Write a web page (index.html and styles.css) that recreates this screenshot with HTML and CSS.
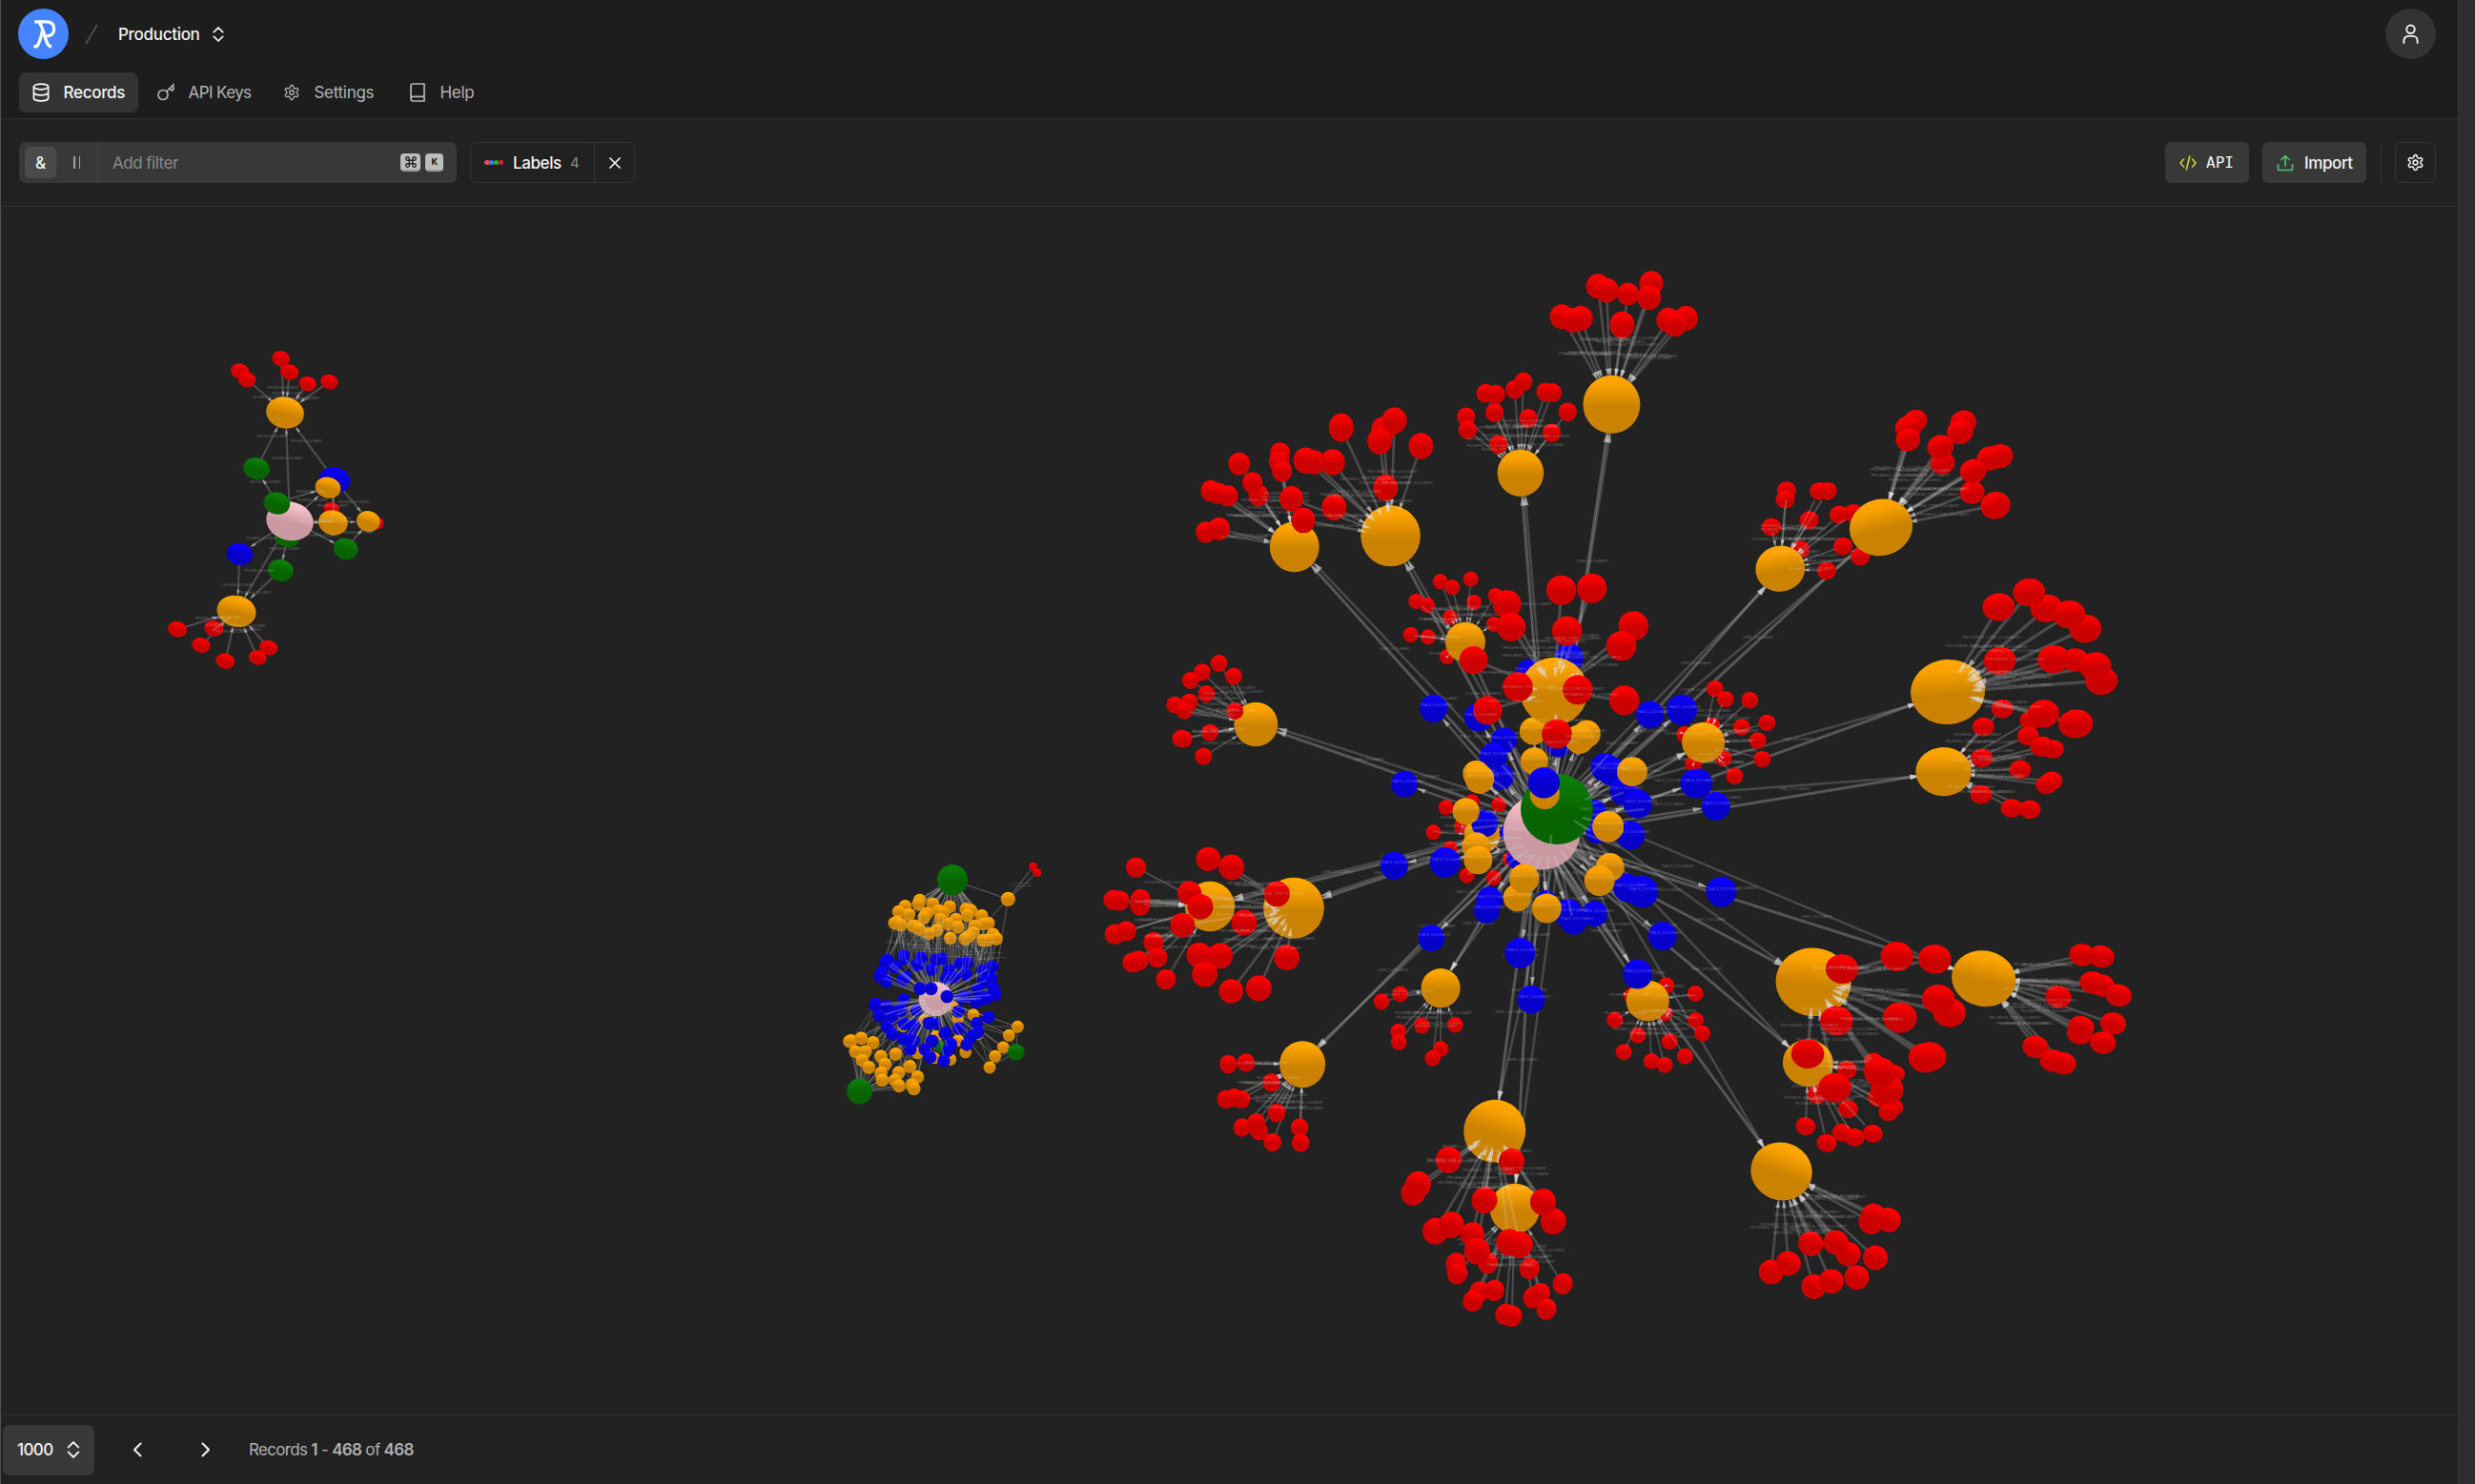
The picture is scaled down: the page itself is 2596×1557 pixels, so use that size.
FILE: index.html
```html
<!DOCTYPE html>
<html lang="en">
<head>
<meta charset="utf-8">
<title>Records</title>
<link rel="stylesheet" href="styles.css">
</head>
<body>
<svg class="defs" width="0" height="0" aria-hidden="true">
  <symbol id="gear" viewBox="0 0 24 24"><path d="M12.2 2h-.4a2 2 0 0 0-2 2v.2a2 2 0 0 1-1 1.7l-.4.3a2 2 0 0 1-2 0l-.2-.1a2 2 0 0 0-2.7.7l-.2.4a2 2 0 0 0 .7 2.7l.2.1a2 2 0 0 1 1 1.7v.5a2 2 0 0 1-1 1.8l-.2.1a2 2 0 0 0-.7 2.7l.2.4a2 2 0 0 0 2.7.7l.2-.1a2 2 0 0 1 2 0l.4.3a2 2 0 0 1 1 1.7v.2a2 2 0 0 0 2 2h.4a2 2 0 0 0 2-2v-.2a2 2 0 0 1 1-1.7l.4-.3a2 2 0 0 1 2 0l.2.1a2 2 0 0 0 2.7-.7l.2-.4a2 2 0 0 0-.7-2.7l-.2-.1a2 2 0 0 1-1-1.8v-.5a2 2 0 0 1 1-1.7l.2-.1a2 2 0 0 0 .7-2.7l-.2-.4a2 2 0 0 0-2.7-.7l-.2.1a2 2 0 0 1-2 0l-.4-.3a2 2 0 0 1-1-1.7V4a2 2 0 0 0-2-2z"/><circle cx="12" cy="12" r="3"/></symbol>
  <symbol id="updown" viewBox="0 0 24 24"><path d="m5 8.500 7-7 7 7M5 15.500l7 7 7-7"/></symbol>
</svg>
<div class="app">
  <header class="header">
    <div class="topbar">
      <svg class="logo" viewBox="0 0 52 52"><circle cx="26" cy="26" r="26"/><path d="M17 13.700h12c5.500 0 8 3 8 7.300 0 4.500-3 7.300-8.500 7.500M22 14.500c3 5 4 9 5.500 14 1.600 6 3 10.500 7 10.500M25.200 22c-1.500 8-3.700 14-6 17h-3.200"/></svg>
      <svg class="slash" viewBox="0 0 14 22"><path d="M1 21 13 1"/></svg>
      <span class="project">Production</span>
      <svg class="icon project-toggle"><use href="#updown"/></svg>
      <div class="avatar"><svg class="icon" viewBox="0 0 18 22"><circle cx="9" cy="6" r="4.500"/><path d="M1.500 21v-2.500a5 5 0 0 1 5-5h5a5 5 0 0 1 5 5V21"/></svg></div>
    </div>
    <nav class="tabs">
      <a class="tab active"><svg class="icon" viewBox="0 0 18 20"><ellipse cx="9" cy="4" rx="7.600" ry="2.800"/><path d="M1.400 4v12c0 1.600 3.400 2.900 7.600 2.900s7.600-1.300 7.600-2.900V4M1.400 10c0 1.600 3.400 2.900 7.600 2.900s7.600-1.300 7.600-2.900"/></svg><span class="t-records">Records</span></a>
      <a class="tab"><svg class="icon" viewBox="0 0 18 20"><circle cx="6" cy="12.500" r="5"/><path d="m9.700 9 7.500-7.500M13 5.600l2.400 2.600 2-2-1.200-3"/></svg><span class="t-api">API Keys</span></a>
      <a class="tab"><svg class="icon"><use href="#gear"/></svg><span class="t-set">Settings</span></a>
      <a class="tab"><svg class="icon" viewBox="0 0 18 20"><path d="M2 16.500V3a2 2 0 0 1 2-2h12v18H4.300A2.300 2.300 0 0 1 2 16.700a2.300 2.300 0 0 1 2.300-2.300H16"/></svg><span class="t-help">Help</span></a>
    </nav>
  </header>

  <div class="toolbar">
    <div class="filter">
      <div class="mode"><span class="and">&amp;</span><span class="or"><i></i><i></i></span></div>
      <span class="placeholder">Add filter</span>
      <kbd><svg class="icon" viewBox="0 0 24 24"><path d="M15 6v12a3 3 0 1 0 3-3H6a3 3 0 1 0 3 3V6a3 3 0 1 0-3 3h12a3 3 0 1 0-3-3"/></svg></kbd><kbd class="k">K</kbd>
    </div>
    <div class="labels">
      <div class="labels-main"><span class="dots"><i class="d1"></i><i class="d2"></i><i class="d3"></i><i class="d4"></i></span><span class="t-labels">Labels</span><span class="count">4</span></div>
      <div class="clear"><svg class="icon" viewBox="0 0 12 12"><path d="m1 1 10 10M11 1 1 11"/></svg></div>
    </div>
    <div class="spacer"></div>
    <button class="btn api"><svg class="icon" viewBox="0 0 18 16"><path d="M4.500 4 1 8l3.500 4M13.500 4 17 8l-3.500 4M10.700 1 7.300 15"/></svg><span>API</span></button>
    <button class="btn import"><svg class="icon" viewBox="0 0 18 18"><path d="M1.500 10.500v5a1 1 0 0 0 1 1h13a1 1 0 0 0 1-1v-5M9 12V2M5 5.500l4-4 4 4"/></svg><span>Import</span></button>
    <div class="sep"></div>
    <button class="square"><svg class="icon"><use href="#gear"/></svg></button>
  </div>

  <main class="canvas"><svg id="graph" viewBox="1 217 2578 1267">
    <defs>
      <linearGradient id="r" x2="0" y2="1"><stop offset="0" stop-color="#ff0000"/><stop offset=".15" stop-color="#f80000"/><stop offset=".55" stop-color="#cb0000"/></linearGradient>
      <linearGradient id="o" x2="0" y2="1"><stop offset="0" stop-color="#ffa800"/><stop offset=".15" stop-color="#fca300"/><stop offset=".55" stop-color="#ca8200"/></linearGradient>
      <linearGradient id="b" x2="0" y2="1"><stop offset="0" stop-color="#0c00ff"/><stop offset=".15" stop-color="#0b00f8"/><stop offset=".55" stop-color="#0700cb"/></linearGradient>
      <linearGradient id="g" x2="0" y2="1"><stop offset="0" stop-color="#0c800c"/><stop offset=".15" stop-color="#0a7a08"/><stop offset=".55" stop-color="#086400"/></linearGradient>
      <linearGradient id="p" x2="0" y2="1"><stop offset="0" stop-color="#fcc4cf"/><stop offset=".15" stop-color="#f2bcc6"/><stop offset=".55" stop-color="#ca99a2"/></linearGradient>
    </defs>
  </svg></main>

  <footer class="footer">
    <div class="limit"><span>1000</span><svg class="icon"><use href="#updown"/></svg></div>
    <svg class="icon prev" viewBox="0 0 10 16"><path d="M8.500 1.500 2 8l6.500 6.500"/></svg>
    <svg class="icon next" viewBox="0 0 10 16"><path d="M1.500 1.500 8 8l-6.500 6.500"/></svg>
    <span class="range">Records <b>1</b> - <b>468</b> of <b>468</b></span>
  </footer>
</div>
<script src="graph.js"></script>
</body>
</html>
```
FILE: styles.css
```css
* { box-sizing: border-box; }
body { margin: 0; background: #212121; color: #f2f2f2; font: 450 17px/22px Inter, "Liberation Sans", sans-serif; letter-spacing: -.2px; white-space: nowrap; }
.defs { display: block; position: absolute; }
.app { width: 2596px; height: 1557px; display: flex; flex-direction: column; border-left: 1px solid #505050; border-right: 17px solid #2d2d2d; box-shadow: inset -1px 0 #393939; overflow: hidden; }
.icon { fill: none; stroke: currentColor; stroke-linecap: round; stroke-linejoin: round; stroke-width: 1.7; flex: none; }
.header { height: 125px; background: #1d1d1d; border-bottom: 1px solid #303030; border-right: 1px solid #393939; padding: 9px 23px 0 18.500px; }
.topbar { height: 53px; display: flex; align-items: center; }
.logo { width: 53px; height: 53px; margin-left: -.5px; fill: none; stroke: #fff; stroke-width: 3.200; stroke-linejoin: round; }
.logo circle { fill: #4583ff; stroke: none; }
.slash { width: 14px; height: 22px; margin-left: 17px; fill: none; stroke: #555; stroke-width: 1.500; }
.project { margin-left: 21px; width: 86px; letter-spacing: -.3px; }
.project-toggle { width: 16px; height: 16px; margin-left: 11px; stroke-width: 2.600; }
.avatar { width: 53px; height: 53px; margin-left: auto; border-radius: 50%; background: #333; display: flex; align-items: center; justify-content: center; }
.avatar .icon { width: 17px; height: 21px; stroke-width: 2; }
.tabs { display: flex; margin-top: 14px; height: 42px; font-weight: 400; color: #b3b3b3; letter-spacing: -.3px; }
.tab { display: flex; align-items: center; padding: 0 15px; gap: 15px; border-radius: 7px; margin-right: 5px; }
.tab .icon { width: 18px; height: 20px; }
.tab.active { background: #333; color: #f5f5f5; font-weight: 450; }
.tab.active .icon { margin-left: -1px; }
.t-records { width: 63px; }
.t-api { width: 64px; letter-spacing: -.6px; }
.t-set { width: 64px; }
.toolbar { height: 92px; border-bottom: 1px solid #2e2e2e; padding: 0 24px 0 19px; display: flex; align-items: center; }
.filter { width: 459px; height: 43px; background: #383838; border-radius: 7px; display: flex; align-items: center; padding-right: 14px; gap: 5px; }
.mode { width: 83px; height: 43px; border-right: 1px solid #474747; display: flex; align-items: center; padding-left: 6px; }
.and { width: 33px; height: 33px; border-radius: 5px; background: #4a4a4a; display: flex; align-items: center; justify-content: center; }
.or { display: flex; gap: 4px; margin-left: 18px; }
.or i { width: 1.500px; height: 13px; background: #a0a0a0; }
.placeholder { flex: 1; margin-left: 10px; color: #8a8a8a; font-weight: 400; letter-spacing: -.5px; }
kbd { width: 21px; height: 19px; border-radius: 4px; background: #bdbdbd; color: #222; border-bottom: 2px solid #999; font: 700 11px/16px "Liberation Mono", monospace; display: flex; align-items: center; justify-content: center; }
kbd.k { width: 19px; }
kbd .icon { width: 14px; height: 14px; stroke-width: 2.200; }
.labels { height: 43px; width: 173px; margin-left: 14px; border: 1px solid #333; border-radius: 7px; display: flex; align-items: center; }
.labels-main { width: 130px; height: 41px; border-right: 1px solid #333; display: flex; align-items: center; padding-left: 14px; }
.dots { display: flex; width: 20px; margin-right: 10px; }
.dots i { width: 5.500px; height: 5.500px; border-radius: 50%; margin-right: -.6px; flex: none; }
.d1 { background: #e05252; } .d2 { background: #3c7dff; } .d3 { background: #2fae2f; } .d4 { background: #e02020; }
.count { margin-left: 10px; color: #8a8a8a; font-size: 15px; font-weight: 400; }
.t-labels { width: 50px; letter-spacing: -.4px; }
.clear { flex: 1; display: flex; justify-content: center; }
.clear .icon { width: 12px; height: 12px; }
.spacer { flex: 1; }
.btn { height: 43px; border: 0; border-radius: 6px; background: #383838; color: #f2f2f2; font: 450 17px/22px Inter, sans-serif; letter-spacing: -.4px; display: flex; align-items: center; padding: 0 15px; }
.api { width: 88px; gap: 10px; margin-right: 14px; }
.api .icon { width: 18px; height: 16px; color: #c9d534; stroke-width: 1.600; }
.api span { font: 400 16px/22px "DejaVu Sans Mono", monospace; letter-spacing: 0; }
.import { width: 109px; gap: 11px; }
.import .icon { width: 18px; height: 18px; color: #46c46d; }
.sep { width: 1px; height: 43px; background: #333; margin: 0 14px 0 15px; }
.square { width: 43px; height: 43px; border: 1px solid #333; border-radius: 6px; background: none; color: #eee; padding: 0; display: flex; align-items: center; justify-content: center; }
.square .icon { width: 19px; height: 19px; stroke-width: 2; }
.canvas { height: 1267px; overflow: hidden; background: #222; border-right: 1px solid #393939; }
#graph { display: block; width: 2578px; height: 1267px; }
#graph line { stroke: #d2d2d2; }
#graph .head { fill: #dcdcdc; fill-opacity: .62; }
#graph text { font-family: "Liberation Sans", sans-serif; font-weight: 400; fill: #e0e0e0; fill-opacity: .38; text-anchor: middle; letter-spacing: 0; }
.footer { height: 73px; border-top: 1px solid #303030; display: flex; align-items: center; padding-left: 2px; }
.limit { width: 96px; height: 53px; border-radius: 7px; background: #383838; display: flex; align-items: center; padding-left: 15px; }
.limit span { width: 37px; letter-spacing: -.6px; }
.limit .icon { width: 18px; height: 18px; margin-left: 13px; stroke-width: 2.600; }
.prev, .next { width: 10px; height: 16px; stroke-width: 2; }
.prev { margin-left: 40px; }
.next { margin-left: 62px; }
.range { margin-left: 40px; color: #b0b0b0; font-weight: 400; letter-spacing: -.68px; }
.range b { font-weight: 600; }
```
FILE: graph.js
```js
const svg = document.getElementById('graph');
const NS = 'http://www.w3.org/2000/svg';
function add(tag, attrs, text) {
  const e = document.createElementNS(NS, tag);
  for (const k in attrs) e.setAttribute(k, attrs[k]);
  if (text) e.textContent = text;
  svg.appendChild(e);
}
const node = (c, x, y, rx, ry = rx, rot = 0) =>
  add('ellipse', { cx: x, cy: y, rx, ry, fill: `url(#${c})`, transform: `rotate(${rot} ${x} ${y})` });
const line = (x1, y1, x2, y2, w, o = .25) =>
  add('line', { x1, y1, x2, y2, 'stroke-width': w, 'stroke-opacity': o });
function head(x, y, ux, uy, s) {
  const bx = x - ux * s, by = y - uy * s, w = s * .28;
  add('polygon', { class: 'head', points: `${x},${y} ${bx - uy * w},${by + ux * w} ${bx + uy * w},${by - ux * w}` });
}
const label = (x, y, size, t) => add('text', { x, y, 'font-size': size }, t);
// Link that stops r short of its target, with an arrow head there.
function link(x1, y1, x2, y2, r, w, s, o) {
  const d = Math.hypot(x2 - x1, y2 - y1) || 1, ux = (x2 - x1) / d, uy = (y2 - y1) / d;
  const tx = x2 - ux * r, ty = y2 - uy * r;
  line(x1, y1, tx, ty, w, o);
  head(tx, ty, ux, uy, s);
  return [x1 + (tx - x1) * .6, y1 + (ty - y1) * .6];
}
// Local coordinate frames: origin x, origin y, units per pixel x, y.
const frames = {
  a: [150, 350, 3, 3], d: [870, 890, 3, 3], n: [1150, 270, 2.45, 3], e: [1780, 400, 3, 3],
  c: [1460, 600, 3, 3], w: [1140, 680, 3, 3], s: [1240, 980, 2.7034, 3], t: [1700, 960, 2.8, 3]
};
const at = (f, x, y) => [frames[f][0] + x / frames[f][2], frames[f][1] + y / frames[f][3]];

const groups = {
  A: ['n', [1324, 463, 30, 30.5], [12.6, 13], 1, [[1196,187],[1245,192],[1225,198],[1289,91],[1311,104],[1366,116,11.5],[1426,82],[1420,127],[1470,198],[1515,192],[1487,211],[1351,213,13,14.300]]],
  B: ['n', [1090, 679, 24.3, 24.6], [9.7, 9.9], 1, [[1000,428],[1027,431],[1075,416],[1097,392],[1154,424],[1172,426],[1023,489],[1110,507],[1211,487],[1170,553],[950,502],[954,543],[1033,589]]],
  C: ['n', [756, 877, 31.3, 32], [13, 13.8], .85, [[629,536,13,15],[738,543],[766,514],[728,579],[834,594],[559,645,12],[538,640],[607,645],[743,725],[611,787],[501,760,12.500],[532,828,12.500]]],
  D: ['n', [509, 911, 26, 26.5], [10.6, 11.2], 1, [[367,650,11.500,12],[472,616],[469,643],[477,673],[417,750],[401,709],[294,735],[313,743],[338,751],[281,865],[315,855,11.500]]],
  E: ['c', [231, 221, 21, 21], [8, 8], 1, [[152,31],[190,49],[248,23],[76,93],[111,105],[258,96],[326,75],[183,144],[321,165],[59,198],[114,205],[174,267]]],
  F: ['c', [510, 376, 35.5, 35.5], [15.8, 15.5], .55, [[533,58],[629,52],[551,186],[760,170],[722,233],[362,102,15],[375,174,15.300],[257,278,15],[396,362],[585,371],[731,404],[301,436,15.300],[519,510]]],
  G: ['c', [980, 537, 22.6, 21.2], [9, 8.7], 1, [[1016,368],[1049,401],[1126,404],[1180,475],[1100,489],[1151,531],[1165,589],[1078,643],[1043,587],[949,604],[1007,485],[922,512]]],
  H: ['c', [284, 828, 19, 19], [8, 8], 1, [[252,724],[170,742],[336,733],[220,801],[130,820],[184,871],[236,956],[320,963],[372,905]]],
  I: ['e', [579, 460, 33.3, 29.7, -15], [14, 12.6, -15], 1, [[687,124,12.500],[665,147],[664,185,13],[838,130],[828,160,14],[773,258,13],[766,207],[922,243],[953,236],[866,350,13.200],[869,283],[939,391,15.800]]],
  J: ['e', [262, 590, 26, 24, -10], [10.2, 9.3, -10], 1, [[282,344],[278,372],[385,346],[410,346],[353,437],[447,420],[491,415],[234,459],[324,530],[459,520],[514,552],[408,597]]],
  K: ['e', [789, 978, 39, 34, -4], [17, 14.6, -5], .8, [[949,711],[1100,715],[1045,665],[1222,779],[1171,734],[953,880],[1190,877,14],[1122,875],[1273,943],[1253,897],[1090,1047],[1192,1078,18.200,15]]],
  L: ['e', [776, 1229, 29.3, 25.6], [11.5, 9.8], 1, [[961,1031],[901,1088],[1050,1068],[1042,1117],[1120,1158],[1086,1150,12.500,10.500],[896,1186],[1017,1222],[1116,1258],[1100,1270],[894,1301],[990,1344],[1047,1348]]],
  M: ['w', [532, 240, 23, 23.2], [9, 9], 1, [[416,48],[363,76],[326,102],[462,89],[376,144],[277,179],[323,170],[307,197],[466,198],[295,285],[305,286],[387,266],[367,341]]],
  N: ['w', [387, 813, 26.2, 26.2], [10.6, 10.6], 1, [[155,691],[84,793],[103,795],[168,811],[169,791],[88,901],[124,891],[210,926],[162,984],[144,990],[222,974],[249,1043]]],
  O: ['w', [651, 818, 31.8, 32], [13.5, 13.4], .55, [[382,664,12.800],[455,690],[323,771,12.600],[357,814],[598,774],[301,872,13],[495,864],[354,967],[419,969],[371,1027],[454,1080,12.800],[541,1071],[629,974]]],
  P: ['s', [733, 170, 20.5, 20.6], [8.4, 8.4], 1, [[565,213],[618,189],[613,307],[614,341],[680,289],[774,286],[733,362],[710,391]]],
  Q: ['s', [341, 410, 24, 24.5], [9.4, 9.7], 1, [[131,410],[181,405],[124,520],[168,520],[147,515],[253,468],[268,563],[170,609],[218,621],[210,593],[333,609],[336,657],[256,656]]],
  R: ['s', [886, 620, 32.4, 33, 20], [13.5, 14, 15], .65, [[755,711],[655,815,12.800],[669,788],[934,716],[857,838],[1052,904],[1023,843],[718,935],[763,916],[823,946,12.500],[836,998],[958,978],[927,970]]],
  S: ['s', [943, 864, 26.3, 26.3], [10.6, 11.2, 15], 1, [[776,1037],[780,1069],[867,1036],[843,1126],[824,1155],[885,1122],[985,1053],[1079,1101],[995,1145],[1015,1132],[1033,1181],[916,1197],[935,1203]]],
  T: ['s', [1320, 210, 22.6, 21.3], [8.6, 8.4], 1, [[1373,162],[1455,188],[1227,271],[1292,319],[1252,372],[1331,401],[1368,412],[1382,339],[1426,385],[1456,272],[1475,313],[1368,250],[1275,195]]],
  U: ['t', [566, 211, 39.6, 35.8, 6], [17.3, 15.4, 5], .72, [[811,131],[922,139],[650,170],[965,307],[933,265],[820,323,18],[634,333],[908,446],[893,450],[549,437],[782,550],[762,495],[629,544]]],
  V: ['t', [550, 466, 26.6, 24.6, 10], [10.6, 9.4, 10], 1, [[664,487],[576,566],[668,611],[543,665],[605,718],[650,685],[686,700],[740,688],[743,462],[805,500],[755,575],[800,605],[786,620]]],
  W: ['t', [1066, 200, 33.8, 29.3, 12], [13.8, 11.7, 12], 1, [[1355,126],[1411,131],[1413,222],[1386,213],[1462,253],[1285,258],[1446,342],[1348,372],[1352,353],[1416,402],[1218,415],[1299,467],[1269,459]]],
  X: ['t', [472, 807, 32.5, 30.3, 20], [13.2, 12.8, 20], 1, [[786,960],[735,966],[742,947],[558,1035],[668,1067],[632,1031],[748,1079],[442,1124],[492,1097],[567,1170],[618,1153],[693,1141]]]
};
// Groups whose leaves sit behind their hub.
const behind = 'EGHJTV';
const blues = [[131,430,14.600],[272,458,15],[353,530,13.500],[343,645,13.500],[319,582,14.600],[39,668,14],[430,315,13],[558,270,15],[812,450,14.600],[912,434,16],[670,615,15],[692,628,15],[525,545,13],[958,666,17,15.600],[1019,738,15],[730,690,15],[774,731,15],[635,755,13],[645,820,12],[751,829,15],[292,793,14],[167,915,16],[7,925,14.600],[307,1033,14],[298,1066,13.600],[124,1153,14],[403,1200,16],[485,1035,11],[572,1100,14],[555,1075,15],[638,1076,13.500],[742,995,15],[788,1007,16.700],[1036,1007,16],[851,1147,15],[773,1266,15.500],[390,905,10],[365,820,9],[438,1346,14.600]];
const oranges = [[445,501,14.500],[613,510,14.500],[590,527,15.300],[448,596,14.500],[265,636,14],[276,652,15.300],[756,629,16,15.300],[233,754,14.200],[265,865,15],[271,907,15],[394,1025,14.500],[416,965,15.500],[487,1059,15.500],[686,930,15],[653,972,16],[680,802,16.300]];

// Spokes from the two roots to every hub.
const hubs = Object.keys(groups).filter(k => !'FHE'.includes(k));
for (const k of hubs) {
  const [f, h] = groups[k], [x, y] = at(f, h[0], h[1]);
  const vx = x - 1625, vy = y - 860, d = Math.hypot(vx, vy);
  const px = -vy / d, py = vx / d, stop = Math.min(h[2], h[3]);
  link(1617 + px * 7, 872 + py * 7, x, y, stop, 3, 10, .3);
  link(1634 - px * 7, 850 - py * 7, x + px * 3, y + py * 3, stop, 2.600, 10, .22);
  for (const t of [.3, .44, .62]) label(1625 + vx * t + px * 5, 860 + vy * t, 3.600, t > .6 ? 'USER_DOCUMENT' : t > .4 ? 'COURSE_DOCUMENT' : 'TRACK_DOCUMENT');
}
link(1620, 860, 1537, 674, 21, 3, 9, .25);
link(1628, 860, 1640, 725, 35, 4, 10, .3);

function group(k) {
  const [f, h, size, tip, leaves] = groups[k], [hx, hy] = at(f, h[0], h[1]);
  const drawLeaves = () => {
    for (const l of leaves) {
      const [x, y] = at(f, l[0], l[1]);
      node('r', x, y, l[2] || size[0], l[3] || l[2] * size[1] / size[0] || size[1], size[2]);
    }
  };
  const back = behind.includes(k);
  if (back) drawLeaves();
  if (tip < 1) node('o', hx, hy, h[2], h[3], h[4]);
  const marks = [];
  leaves.forEach((l, i) => {
    const [x, y] = at(f, l[0], l[1]), r = size[0];
    const reach = tip < 1 ? tip + (i * 7 % 5 - 2) * .06 : 1;
    const start = back ? .12 : 0;
    marks.push(link(x + (hx - x) * start, y + (hy - y) * start, hx, hy, Math.min(h[2], h[3]) * reach, Math.max(1.600, r * .2), r * .62, .23));
  });
  if (tip >= 1) node('o', hx, hy, h[2], h[3], h[4]);
  if (!back) drawLeaves();
  marks.forEach(([x, y]) => label(x, y, 1.800 + size[0] * .13, 'PROGRESS_TYPE_DOCUMENT'));
}
'MQBADCJILKPTXWVUSRNOEGH'.split('').forEach(group);

// Central fan.
const P = [1617, 873];
for (const [x, y, r] of [...blues, ...oranges]) {
  const [bx, by] = at('c', x, y);
  link(P[0], P[1], bx, by, r, 2.600, 9, .28);
}
for (const [x, y, r, q] of blues) {
  const [bx, by] = at('c', x, y);
  node('b', bx, by, r, q);
}
// Links that run in front of the far nodes.
for (let i = 0; i < 26; i++) {
  const a = i * .2417 + .13, r = 62 + (i * 17) % 43;
  line(1625 + 34 * Math.cos(a), 860 + 34 * Math.sin(a), 1625 + r * Math.cos(a), 860 + r * Math.sin(a), 2.600, .22);
}
for (const [x, y, r, q] of oranges) {
  const [bx, by] = at('c', x, y);
  node('o', bx, by, r, q);
}
group('F');
node('p', 1617, 873, 40.500, 39.500);
for (let i = 0; i < 9; i++) {
  const a = .5 + i * .31;
  line(1620 + 24 * Math.cos(a), 875 + 24 * Math.sin(a), 1617 + 42 * Math.cos(a), 873 + 42 * Math.sin(a), 2.500, .26);
}
node('g', 1633, 849, 38, 37);
line(1627, 876, 1626, 888, 2.500, .25);
line(1651, 861, 1668, 872, 2.500, .25);
line(1660, 858, 1672, 861, 2.500, .25);
line(1663, 839, 1672, 834, 2.500, .25);
// Near oranges that overlap the pink root.
node('o', ...at('c', 416, 965), 15.500);
node('o', ...at('c', 680, 802), 16.300);
node('o', 1620.300, 833.500, 15.500);
node('b', 1619.300, 821.300, 16.700, 16.300);
for (const [x, y] of [...blues, ...oranges]) {
  const [bx, by] = at('c', x, y);
  label(bx + 3, by - 2, 3.600, 'TRACK_DOCUMENT');
}

// Small cluster on the left.
const left = {
  links: [[327,145,447,249,17],[434,79,445,249,17],[461,121,449,249,16],[518,158,447,249,18],[586,152,447,249,19],[357,425,447,249,17],[462,590,449,249,17],[603,461,447,249,19],[421,534,357,425,13],[462,520,582,485,13],[470,585,582,485,13],[603,461,711,591,13],[595,485,600,595,7],[462,590,598,595,14],[462,600,711,591,14],[470,590,638,678,13],[638,678,711,591,11],[462,590,304,694,14],[462,600,433,745,11],[433,745,294,874,20],[462,590,294,874,17],[304,694,297,874,17],[108,931,294,874,20],[223,928,294,874,7],[183,981,294,874,18],[259,1031,294,874,17],[361,1020,294,874,19],[395,989,294,874,20],[620,620,598,560,3]],
  nodes: [['r',305,119,10,8],['r',327,145,9.500,8],['r',434,79,9.500,8],['r',461,121,10,8],['r',518,158,9.300,7.600],['r',586,152,9.300,7.600],['o',447,249,20,16.500],['g',357,425,14,11.500],['b',603,461,16.500,13.500],['o',582,485,13.500,11],['r',593,551,8.500,6.500],['o',598,595,15.500,13],['r',738,597,6.500],['o',709,591,12.500,10.800],['g',452,645,13,9],['g',638,678,13,11],['p',462,590,25,20.300],['g',421,534,14,11.500],['b',304,694,14,11.500],['g',433,745,13.500,11.500],['o',294,874,20.700,16.400],['r',108,931,10.200,8.200],['r',223,928,10.200,8.200],['r',183,981,10,7.800],['r',259,1031,10,8],['r',361,1020,9.600,7.700],['r',395,989,9.800,7.800]]
};
for (const [a, b, c, d, r] of left.links) {
  const p = at('a', a, b), q = at('a', c, d);
  link(p[0], p[1], q[0], q[1], r, 2, 5.500, .25);
}
for (const [c, x, y, rx, ry] of left.nodes) node(c, ...at('a', x, y), rx, ry, 13);
for (const [a, b, c, d] of left.links) label(...at('a', (a + c * 1.300) / 2.300, (b + d * 1.300) / 2.300), 2.700, 'PROGRESS_DOCUMENT');
line(223, 662, 242, 647, 1.500, .4);
line(335, 547.500, 350, 547.500, 1.500, .35);
line(350, 520, 350, 540, 1.500, .35);

// Dense cluster at the bottom centre.
const upO = [[284,164],[280,176],[325,175],[238,183],[378,184],[218,200],[205,236],[250,209],[225,241],[213,232],[305,205],[298,218],[344,197],[350,224],[358,202],[270,245],[283,255],[263,245],[313,268],[338,258],[374,238],[398,224],[404,248],[430,192],[445,196],[434,211],[380,283],[427,285],[438,277],[452,266],[457,245],[479,213],[500,236],[485,238],[515,271],[525,285],[483,290],[497,289]];
const upB = [[182,352],[176,360],[233,338],[232,350],[206,374],[166,390],[158,403],[180,420],[241,405],[230,415],[288,345],[280,367],[274,368],[320,383],[334,352],[354,348],[376,384],[368,408],[391,406],[381,407],[410,364],[433,360],[430,398],[482,384],[512,373],[509,410],[484,420],[466,445],[515,442],[522,461],[495,472],[480,475],[461,484],[416,472],[428,468]];
const loB = [[145,490],[181,497],[144,496],[158,528],[197,530],[225,511],[219,510],[234,476],[181,562],[198,585],[235,553],[266,558],[262,562],[232,600],[249,600],[265,605],[255,632],[312,550],[330,552],[323,607],[317,658],[300,632],[272,510],[405,514],[407,567],[364,582],[382,616],[373,637],[360,669],[463,551],[467,580],[446,592],[432,618],[500,532]];
const farO = [[268,510],[300,540],[390,500],[404,535],[453,524],[232,560],[335,592],[405,605],[277,645],[330,660],[381,665],[428,642],[467,585]];
const lowO = [[68,606],[63,608],[100,598],[137,612],[82,640],[113,640],[103,668],[124,690],[162,655],[175,680],[208,648],[162,708],[166,730],[218,706],[206,730],[219,748],[253,687],[277,720],[259,745],[266,757]];
const sideO = [[592,562],[565,589],[547,627],[521,655],[504,690]];
const T = (a, b, c, d, o = .2, w = 1.200) => { const p = at('d', a, b), q = at('d', c, d); line(...p, ...q, w, o); };
upO.forEach(([x, y], i) => { T(387, 100, x, y, .25); T(x, y, ...upB[Math.round(i * .9)], .2); T(x, y, 330 + (x - 330) * .35, 440, .16); });
lowO.forEach(([x, y], i) => { T(95, 765, x, y, .25); T(335, 475, x, y, .22); T(x, y, ...loB[i % 18], .2); });
sideO.forEach(([x, y]) => { T(587, 642, x, y, .25); T(335, 475, x, y, .3); T(463, 560, x, y, .22); });
farO.forEach(([x, y]) => T(335, 475, x, y, .3));
T(387, 100, 562, 160, .3); T(562, 160, 641, 58, .3); T(562, 160, 653, 77, .3); T(562, 160, 510, 215, .25); T(562, 160, 522, 410, .25);
const set = (list, c, r) => list.forEach(([x, y]) => node(c, ...at('d', x, y), r));
set(farO, 'o', 6.300);
node('g', ...at('d', 350, 625), 6);
set(upO.slice().sort((a, b) => a[1] - b[1]), 'o', 6.900);
set(lowO, 'o', 6.900);
node('p', ...at('d', 335, 475), 18);
set([...upB, ...loB].sort((a, b) => a[1] - b[1]), 'b', 6.700);
[...upB, ...loB].forEach(([x, y]) => {
  const dx = x - 335, dy = y - 475, d = Math.hypot(dx, dy);
  T(335 + dx / d * 34, 475 + dy / d * 34, x - dx / d * 16, y - dy / d * 16, .3, 1.500);
});
upO.forEach(([x, y]) => { T(x, y + 12, x + (335 - x) * .14, y + 118, .2); label(...at('d', x, y + 60), 2.400, 'PART_DOCUMENT'); });
set(sideO, 'o', 6.500);
set([[285,442],[320,442],[370,467],[315,551],[323,607],[364,582]], 'b', 6.800);
node('g', ...at('d', 387, 100), 16.200);
node('g', ...at('d', 95, 765), 13.500);
node('g', ...at('d', 587, 642), 8.800);
node('o', ...at('d', 562, 160), 7.700);
node('r', ...at('d', 641, 58), 4.500);
node('r', ...at('d', 653, 77), 4.500);
label(...at('d', 604, 110), 2.400, 'TYPE_DOCUMENT');
label(...at('d', 604, 120), 2.400, 'TYPE_DOCUMENT');
```
